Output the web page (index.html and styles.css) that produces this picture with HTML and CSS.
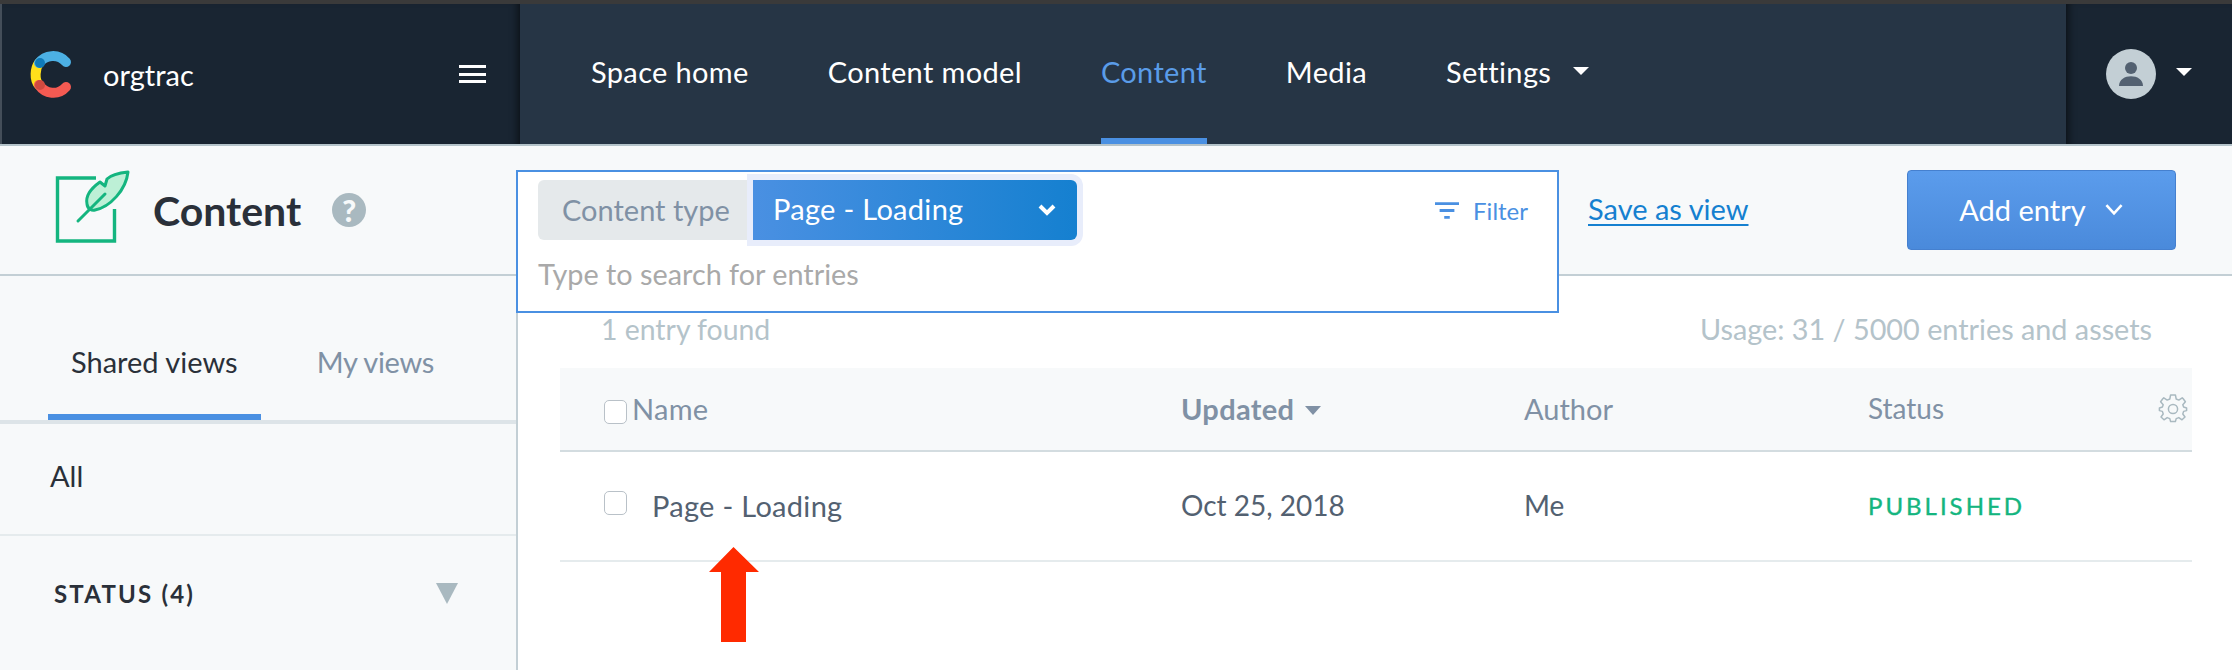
FILE: index.html
```html
<!DOCTYPE html>
<html>
	<head>
		<title>Content - orgtrac</title>
		<link rel="stylesheet" href="styles.css">
	</head>
	<body>
		<div class="top-strip"></div>
		<nav class="nav">
			<div class="brand">
				<svg class="logo" viewBox="0 0 44 50" width="44" height="50">
					<path d="M9 14 C5 19 4 31 9 36" fill="none" stroke="#ffe01b" stroke-width="10" stroke-linecap="round"/>
					<path d="M9 14 C15 6 28 4 36 13" fill="none" stroke="#4cb0e4" stroke-width="10" stroke-linecap="round"/>
					<path d="M9 36 C15 45 28 47 36 38" fill="none" stroke="#f45a52" stroke-width="10" stroke-linecap="round"/>
					<circle cx="10" cy="14" r="5" fill="#0f7ab8"/>
					<circle cx="10" cy="36" r="5" fill="#cf4a40"/>
				</svg>
				<span class="brand-name">orgtrac</span>
				<div class="burger"><i></i><i></i><i></i></div>
			</div>
			<div class="menu">
				<a class="menu-item">Space home</a>
				<a class="menu-item">Content model</a>
				<a class="menu-item active">Content</a>
				<a class="menu-item">Media</a>
				<a class="menu-item">Settings<span class="caret settings-caret"></span></a>
			</div>
			<div class="account">
				<svg class="avatar" viewBox="0 0 50 50" width="50" height="50">
					<circle cx="25" cy="25" r="25" fill="#c3cfd5"/>
					<circle cx="25" cy="19" r="6" fill="#536171"/>
					<path d="M13 37 C13 24 37 24 37 37 Z" fill="#536171"/>
				</svg>
				<span class="caret account-caret"></span>
			</div>
		</nav>

		<header class="workbar">
			<div class="title-area">
				<svg class="feather" viewBox="0 0 90 80" width="90" height="80">
					<path d="M46 11 H7.5 V74 H64.5 V42" fill="none" stroke="#14b57f" stroke-width="3.4"/>
					<path d="M78 5 C68 6 60 9 57 12 L55 19 L50 15 C43 20 35 28 37 37 C37.5 42 42 44 45 43 C60 40 76 23 78 5 Z" fill="#bdf0d6" stroke="#14b57f" stroke-width="3" stroke-linejoin="round"/>
					<path d="M28 54 L55 27" fill="none" stroke="#14b57f" stroke-width="3" stroke-linecap="round"/>
				</svg>
				<h1>Content</h1>
				<span class="help">?</span>
			</div>
			<div class="search">
				<div class="pill-row">
					<span class="pill-label">Content type</span>
					<span class="pill-value"><span class="pill-text">Page - Loading</span>
						<svg viewBox="0 0 20 14" width="20" height="14"><path d="M3 3 L10 10 L17 3" fill="none" stroke="#fff" stroke-width="4"/></svg>
					</span>
					<span class="filter">
						<svg viewBox="0 0 26 18" width="24" height="17"><path d="M0 1.5 H26 M5 9 H21 M10 16.5 H16" fill="none" stroke="#4a90e2" stroke-width="3"/></svg>
						Filter
					</span>
				</div>
				<div class="placeholder">Type to search for entries</div>
			</div>
			<a class="save-view">Save as view</a>
			<button class="add-entry">Add entry
				<svg viewBox="0 0 18 12" width="20" height="13"><path d="M2 2 L9 9.5 L16 2" fill="none" stroke="#fff" stroke-width="2.4"/></svg>
			</button>
		</header>

		<div class="page">
			<aside class="sidebar">
				<div class="tabs">
					<span class="tab current">Shared views</span>
					<span class="tab other">My views</span>
				</div>
				<div class="view-all">All</div>
				<div class="group">
					<span>STATUS (4)</span>
					<span class="group-arrow"></span>
				</div>
			</aside>
			<main class="main">
				<div class="stats">
					<span class="found">1 entry found</span>
					<span>Usage: 31 / 5000 entries and assets</span>
				</div>
				<div class="grid-row head">
					<div class="name-cell"><span class="check head-check"></span>Name</div>
					<div class="sorted">Updated<span class="sort-caret"></span></div>
					<div>Author</div>
					<div class="status-head">Status</div>
					<svg class="gear" viewBox="0 0 30 30" width="30" height="30">
						<path d="M12.6 2 H17.4 L18.2 6 L20.8 7.1 L24.2 4.8 L25.2 5.8 L27.4 8.8 L24.8 11.8 L25.6 14 L28.6 15 V17.6 L25.6 18.4 L24.8 21 L27 24 L24 26.8 L20.8 24.6 L18.2 25.6 L17.4 28.6 H12.6 L11.8 25.6 L9.2 24.6 L6 26.8 L3 24 L5.2 21 L4.4 18.4 L1.4 17.6 V15 L4.4 14 L5.2 11.8 L2.6 8.8 L4.8 5.8 L5.8 4.8 L9.2 7.1 L11.8 6 Z" fill="none" stroke="#a9b9c0" stroke-width="1.5" stroke-linejoin="round"/>
						<circle cx="15" cy="16" r="4.6" fill="none" stroke="#a9b9c0" stroke-width="1.5"/>
					</svg>
				</div>
				<div class="grid-row entry">
					<div class="name-cell entry-name"><span class="check row-check"></span>Page - Loading</div>
					<div class="cell-small">Oct 25, 2018</div>
					<div class="cell-small">Me</div>
					<div class="published">PUBLISHED</div>
				</div>
			</main>
		</div>

		<svg class="red-arrow" viewBox="0 0 50 95" width="50" height="95">
			<path d="M24.5 0 L50 25 H37 V95 H12 V25 H0 Z" fill="#ff2a00"/>
		</svg>
	</body>
</html>
```

FILE: styles.css
```css
html,
body {
	margin: 0;
	height: 670px;
	overflow: hidden;
}

body {
	position: relative;
	background: #fff;
	font-family: Lato, "Open Sans", sans-serif;
	font-size: 29px;
	color: #536171;
}

.top-strip {
	height: 4px;
	background: #3a3a3a;
}

.nav {
	display: flex;
	height: 140px;
	overflow: hidden;
	background: #263545;
	border-bottom: 2px solid #b4c3ca;
}
.brand {
	display: flex;
	align-items: center;
	box-sizing: border-box;
	width: 520px;
	padding-left: 28px;
	background: #192532;
	border-left: 2px solid #444e59;
	box-shadow: inset -8px 0 8px -6px rgba(0, 0, 0, 0.6);
}
.brand-name {
	margin-left: 29px;
	color: #fff;
}
.burger {
	margin-left: auto;
	margin-right: 34px;
}
.burger i {
	display: block;
	width: 27px;
	height: 3px;
	margin: 4.5px 0;
	background: #fff;
}

.menu {
	display: flex;
	flex: 1;
	gap: 79px;
	padding-left: 71px;
}
.menu-item {
	display: flex;
	align-items: center;
	box-sizing: border-box;
	height: 140px;
	letter-spacing: 0.35px;
	color: #fff;
	border-bottom: 6px solid transparent;
}
.menu-item.active {
	color: #5a9ce8;
	border-bottom-color: #4a90e2;
}
.caret {
	display: inline-block;
	width: 0;
	height: 0;
	border-left: 8px solid transparent;
	border-right: 8px solid transparent;
	border-top: 8px solid #fff;
}
.settings-caret {
	margin-left: 22px;
}
.account {
	display: flex;
	align-items: center;
	box-sizing: border-box;
	width: 166px;
	padding-left: 40px;
	background: #192532;
	box-shadow: inset 8px 0 8px -6px rgba(0, 0, 0, 0.6);
}
.account-caret {
	margin-left: 20px;
	margin-bottom: 4px;
}

.workbar {
	display: flex;
	height: 128px;
	background: #f7f9fa;
	border-bottom: 2px solid #c3cfd5;
}
.title-area {
	display: flex;
	align-items: center;
	box-sizing: border-box;
	width: 516px;
	padding-left: 50px;
}
.feather {
	margin-top: -6px;
}
.title-area h1 {
	margin: 0 0 0 13px;
	font-size: 41px;
	font-weight: 700;
	color: #2a3039;
}
.help {
	display: flex;
	align-items: center;
	justify-content: center;
	width: 34px;
	height: 34px;
	margin-left: 31px;
	border-radius: 50%;
	background: #a9b9c0;
	color: #f7f9fa;
	font-size: 30px;
	font-weight: 900;
}

.search {
	position: relative;
	z-index: 2;
	box-sizing: border-box;
	width: 1043px;
	height: 143px;
	margin-top: 24px;
	padding: 8px 29px 0 20px;
	background: #fff;
	border: 2px solid #4a90e2;
}
.pill-row {
	display: flex;
	align-items: center;
}
.pill-label {
	display: flex;
	align-items: center;
	box-sizing: border-box;
	width: 215px;
	height: 60px;
	padding: 0 0 2px 24px;
	background: #e5e9eb;
	border-radius: 6px 0 0 6px;
	color: #8091a5;
}
.pill-value {
	display: flex;
	align-items: center;
	justify-content: space-between;
	box-sizing: border-box;
	width: 324px;
	height: 60px;
	padding: 0 20px;
	background: linear-gradient(90deg, #4a90e2, #1580d0);
	border-radius: 0 6px 6px 0;
	box-shadow: 0 0 0 6px #e8edfb;
	letter-spacing: 0.3px;
	color: #fff;
}
.pill-text {
	margin-bottom: 4px;
}
.filter {
	display: flex;
	align-items: center;
	gap: 14px;
	margin-left: auto;
	font-size: 24px;
	color: #4a90e2;
}
.placeholder {
	margin-top: 17px;
	font-size: 28.8px;
	color: #a9a9a9;
}

.save-view {
	height: 38px;
	margin: 44px 0 0 29px;
	line-height: 38px;
	color: #1580d0;
	text-decoration: underline;
	text-decoration-thickness: 2px;
	text-underline-offset: 4px;
}
.add-entry {
	display: flex;
	align-items: center;
	justify-content: center;
	gap: 18px;
	width: 269px;
	height: 80px;
	margin: 24px 56px 0 auto;
	padding: 0 0 2px;
	background: linear-gradient(#5b9cec, #4a8adb);
	border: 1px solid #4580cf;
	border-radius: 4px;
	color: #fff;
	font-family: inherit;
	font-size: 29px;
}

.page {
	display: flex;
	height: 394px;
}
.sidebar {
	box-sizing: border-box;
	width: 518px;
	background: #f7f9fa;
	border-right: 2px solid #c3cfd5;
}
.tabs {
	display: flex;
	gap: 56px;
	padding-left: 48px;
	border-bottom: 4px solid #dde4e8;
}
.tab {
	padding: 67px 23px 33px;
	line-height: 38px;
	color: #8091a5;
	border-bottom: 6px solid transparent;
}
.tab.current {
	color: #2a3039;
	border-bottom-color: #4a90e2;
}
.tab.other {
	padding-left: 0;
	letter-spacing: -0.3px;
}
.view-all {
	box-sizing: border-box;
	height: 112px;
	padding: 33px 0 0 50px;
	line-height: 38px;
	color: #2a3039;
	border-bottom: 2px solid #e5ebed;
}
.group {
	display: flex;
	justify-content: space-between;
	padding: 39px 58px 0 54px;
	line-height: 38px;
	font-size: 24px;
	font-weight: 700;
	letter-spacing: 2.2px;
	color: #2a3039;
}
.group-arrow {
	width: 0;
	height: 0;
	margin-top: 8px;
	border-left: 11px solid transparent;
	border-right: 11px solid transparent;
	border-top: 21px solid #a9b9c0;
}

.main {
	flex: 1;
	min-width: 0;
	padding: 34px 40px 0 42px;
}
.stats {
	display: flex;
	justify-content: space-between;
	margin-bottom: 20px;
	padding: 0 40px 0 41px;
	line-height: 38px;
	font-size: 28.8px;
	color: #b4c3ca;
}
.found {
	font-size: 28.4px;
}
.grid-row {
	display: grid;
	grid-template-columns: 621px 343px 344px 290px 34px;
	align-items: center;
	box-sizing: border-box;
	padding-bottom: 2px;
}
.head {
	height: 84px;
	background: #f7f9fa;
	border-bottom: 2px solid #d3dce0;
	color: #8091a5;
}
.entry {
	height: 110px;
	border-bottom: 2px solid #e5ebed;
}
.name-cell {
	display: flex;
	align-items: center;
	padding-left: 44px;
	letter-spacing: 0.3px;
}
.check {
	box-sizing: border-box;
	width: 23px;
	height: 24px;
	background: #fff;
	border: 1.5px solid #b9c1c8;
	border-radius: 5px;
}
.head-check {
	margin: 7px 5px 0 0;
}
.row-check {
	margin: -4px 25px 0 0;
}
.sorted {
	font-weight: 700;
	letter-spacing: 0.3px;
}
.sort-caret {
	display: inline-block;
	width: 0;
	height: 0;
	margin: 0 0 3px 11px;
	vertical-align: middle;
	border-left: 8px solid transparent;
	border-right: 8px solid transparent;
	border-top: 9px solid #8091a5;
}
.status-head {
	font-size: 28px;
}
.cell-small {
	font-size: 28px;
}
.gear {
	margin-bottom: 1px;
}
.published {
	font-size: 24px;
	letter-spacing: 3px;
	color: #14b57f;
	-webkit-text-stroke: 0.4px #14b57f;
}

.red-arrow {
	position: absolute;
	left: 709px;
	top: 547px;
}
```
